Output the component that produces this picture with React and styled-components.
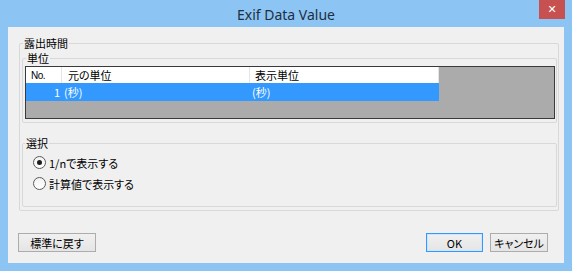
import React from 'react';
import styled, { createGlobalStyle } from 'styled-components';

const GlobalStyle = createGlobalStyle`
  html, body {
    margin: 0;
    padding: 0;
    background: #8cc4f4;
  }
  * {
    box-sizing: border-box;
  }
`;

const uiFont = `"Noto Sans CJK JP", "Liberation Sans", sans-serif`;

// window chrome
const Window = styled.div`
  width: 572px;
  height: 271px;
  display: flex;
  flex-direction: column;
  background: #8cc4f4;
  font-family: ${uiFont};
  font-size: 11px;
  font-feature-settings: 'palt';
  color: #000;
`;

const TitleBar = styled.div`
  height: 27px;
  display: grid;
  grid-template-columns: 1fr auto 1fr;
  align-items: start;
`;

const Title = styled.div`
  grid-column: 2;
  padding-top: 6px;
  font-family: "Noto Sans", "Open Sans", sans-serif;
  font-size: 14px;
  line-height: 18px;
  color: #1f2f3f;
`;

const CloseButton = styled.div`
  grid-column: 3;
  justify-self: end;
  margin-right: 7px;
  width: 26px;
  height: 19px;
  background: #c75050;
  color: #fff;
  display: flex;
  align-items: center;
  justify-content: center;
  font-family: "DejaVu Sans", sans-serif;
  font-size: 11px;
  font-weight: bold;
`;

const Client = styled.div`
  flex: 1;
  margin: 0 8px 8px;
  background: #f0f0f0;
  display: flex;
  flex-direction: column;
  padding-top: 9px;
`;

// group boxes
const Group = styled.fieldset`
  margin: ${p => p.$margin || '0'};
  padding: 0;
  border: 1px solid #d8d8d8;
  border-radius: 2px;
  min-inline-size: 0;
`;

const Legend = styled.legend`
  margin-left: ${p => p.$indent || 3}px;
  padding: 0 1px;
  line-height: 14px;
  font-size: 11px;
`;

// list view
const ListBox = styled.div`
  margin: 1px 1px 3px 2px;
  height: 53px;
  border: 1px solid #3a3a3a;
  background: #ababab;
`;

const ListRow = styled.div`
  width: 413px;
  height: ${p => (p.$header ? 16 : 18)}px;
  display: grid;
  grid-template-columns: 36px 188px 189px;
  align-items: center;
  background: ${p => (p.$selected ? '#3399ff' : '#fff')};
  color: ${p => (p.$selected ? '#fff' : '#000')};
`;

const HeaderCell = styled.div`
  height: 100%;
  display: flex;
  align-items: center;
  padding-left: ${p => p.$pad || 6}px;
  border-right: 1px solid #e5e5e5;
  white-space: nowrap;
`;

const Cell = styled.div`
  padding: 0 ${p => (p.$right ? 2 : 0)}px 0 ${p => (p.$right ? 0 : 2)}px;
  text-align: ${p => (p.$right ? 'right' : 'left')};
  white-space: nowrap;
`;

const NoLabel = styled.span`
  font-family: "Liberation Sans", sans-serif;
  font-size: 10px;
  letter-spacing: -0.5px;
`;

// radios
const RadioList = styled.div`
  padding: 2px 0 12px 10px;
  display: flex;
  flex-direction: column;
`;

const RadioRow = styled.label`
  height: 21px;
  display: flex;
  align-items: center;
  gap: 3px;
`;

const RadioMark = styled.span`
  width: 13px;
  height: 13px;
  border-radius: 50%;
  border: 1px solid #5a5a5a;
  background: linear-gradient(#f2f2f2, #ffffff);
  display: flex;
  align-items: center;
  justify-content: center;

  &::after {
    content: '';
    width: 5px;
    height: 5px;
    border-radius: 50%;
    background: ${p => (p.$checked ? '#1e1e1e' : 'transparent')};
  }
`;

// footer buttons
const Footer = styled.div`
  margin-top: auto;
  display: flex;
  align-items: center;
  padding: 0 16px 11px 10px;
  gap: 7px;
`;

const Button = styled.button`
  width: ${p => p.$w}px;
  height: 19px;
  padding: 0;
  font-family: ${uiFont};
  font-size: 11px;
  font-feature-settings: 'palt';
  color: #000;
  border: 1px solid ${p => (p.$default ? '#3399ff' : '#acacac')};
  border-radius: 0;
  background: linear-gradient(#f0f0f0, #e5e5e5);
  box-shadow: ${p => (p.$default ? 'inset 0 0 0 1px #cde6fb' : 'none')};
`;

const Spacer = styled.div`
  flex: 1;
`;

export default function App() {
  return (
    <>
      <GlobalStyle />
      <Window>
        <TitleBar>
          <Title>Exif Data Value</Title>
          <CloseButton>✕</CloseButton>
        </TitleBar>
        <Client>
          <Group $margin="0 5px 0 11px">
            <Legend $indent={3}>露出時間</Legend>
            <Group $margin="1px 1px 0 2px">
              <Legend $indent={3}>単位</Legend>
              <ListBox>
                <ListRow $header>
                  <HeaderCell $pad={5}><NoLabel>No.</NoLabel></HeaderCell>
                  <HeaderCell>元の単位</HeaderCell>
                  <HeaderCell $pad={5}>表示単位</HeaderCell>
                </ListRow>
                <ListRow $selected>
                  <Cell $right>1</Cell>
                  <Cell>(秒)</Cell>
                  <Cell>(秒)</Cell>
                </ListRow>
              </ListBox>
            </Group>
            <Group $margin="13px 1px 3px 2px">
              <Legend $indent={2}>選択</Legend>
              <RadioList>
                <RadioRow>
                  <RadioMark $checked />
                  1/nで表示する
                </RadioRow>
                <RadioRow>
                  <RadioMark />
                  計算値で表示する
                </RadioRow>
              </RadioList>
            </Group>
          </Group>
          <Footer>
            <Button $w={78}>標準に戻す</Button>
            <Spacer />
            <Button $w={57} $default>OK</Button>
            <Button $w={58}>キャンセル</Button>
          </Footer>
        </Client>
      </Window>
    </>
  );
}
